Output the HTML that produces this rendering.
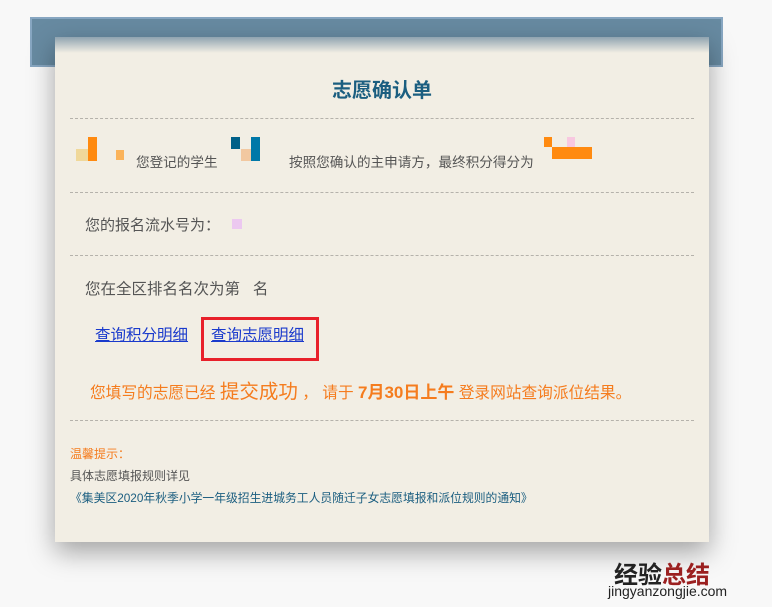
<!DOCTYPE html><html><head><meta charset="utf-8"><style>
body{margin:0;width:772px;height:607px;background:#f8f8f8;position:relative;overflow:hidden;font-family:"Liberation Sans","Noto Sans CJK SC",sans-serif}
.bar{position:absolute;left:30px;top:17px;width:689px;height:46px;background:#678aa1;border:2px solid #87a6c1}
.card{position:absolute;left:55px;top:37px;width:654px;height:505px;background:#f2eee4;box-shadow:0 10px 25px rgba(0,0,0,.35)}
.card:before{content:"";position:absolute;left:0;top:0;right:0;height:16px;background:linear-gradient(#8fa3b0,#f2eee4)}
.t{position:absolute;white-space:nowrap}
.hr{position:absolute;left:15px;width:624px;border-top:1px dashed #b5b2ab}
.px{position:absolute}
</style></head><body>
<div class="bar"></div>
<div class="card">
<div class="t" style="left:0;width:654px;text-align:center;top:37px;font-size:20px;font-weight:bold;color:#1b5e80">志愿确认单</div>
<div class="hr" style="top:81px"></div>
<div class="px" style="left:21px;top:112px;width:12px;height:12px;background:#f0d89a"></div>
<div class="px" style="left:33px;top:100px;width:9px;height:24px;background:#ff8a10"></div>
<div class="px" style="left:61px;top:113px;width:8px;height:10px;background:#fbb35a"></div>
<div class="t" style="left:81px;top:114px;font-size:13.6px;color:#555">您登记的学生</div>
<div class="px" style="left:176px;top:100px;width:9px;height:12px;background:#006088"></div>
<div class="px" style="left:186px;top:112px;width:10px;height:12px;background:#f2c8a0"></div>
<div class="px" style="left:196px;top:100px;width:9px;height:24px;background:#0078a8"></div>
<div class="t" style="left:234px;top:114px;font-size:13.6px;color:#555">按照您确认的主申请方，最终积分得分为</div>
<div class="px" style="left:489px;top:100px;width:8px;height:10px;background:#ff8a10"></div>
<div class="px" style="left:497px;top:110px;width:40px;height:12px;background:#ff8a10"></div>
<div class="px" style="left:512px;top:100px;width:8px;height:10px;background:#f8c8e0"></div>
<div class="hr" style="top:155px"></div>
<div class="t" style="left:30px;top:177px;font-size:15px;color:#555">您的报名流水号为：</div>
<div class="px" style="left:177px;top:182px;width:10px;height:10px;background:#ecc8f0"></div>
<div class="hr" style="top:218px"></div>
<div class="t" style="left:30px;top:240px;font-size:15.5px;color:#555">您在全区排名名次为第 &nbsp; 名</div>
<div class="t" style="left:40px;top:286px;font-size:15.5px;color:#1a3acc;text-decoration:underline">查询积分明细</div>
<div class="t" style="left:156px;top:286px;font-size:15.5px;color:#1a3acc;text-decoration:underline">查询志愿明细</div>
<div class="px" style="left:146px;top:280px;width:112px;height:38px;border:3px solid #e8202a"></div>
<div class="t" style="left:35px;top:338px;font-size:15.7px;color:#f57c1e">您填写的志愿已经 <span style="font-size:19.5px">提交成功</span> ， 请于 <b style="font-size:17px">7月30日上午</b> 登录网站查询派位结果。</div>
<div class="hr" style="top:383px"></div>
<div class="t" style="left:15px;top:408px;font-size:12px;color:#f57c1e">温馨提示：</div>
<div class="t" style="left:15px;top:430px;font-size:12px;color:#555">具体志愿填报规则详见</div>
<div class="t" style="left:15px;top:452px;font-size:11.8px;color:#1b5e80">《集美区2020年秋季小学一年级招生进城务工人员随迁子女志愿填报和派位规则的通知》</div>
</div>
<div class="t" style="left:614px;top:555px;font-size:24px;font-weight:bold;color:#222">经验<span style="color:#9b2020">总结</span></div>
<div class="t" style="left:608px;top:583px;font-size:14px;color:#222">jingyanzongjie.com</div>
</body></html>
